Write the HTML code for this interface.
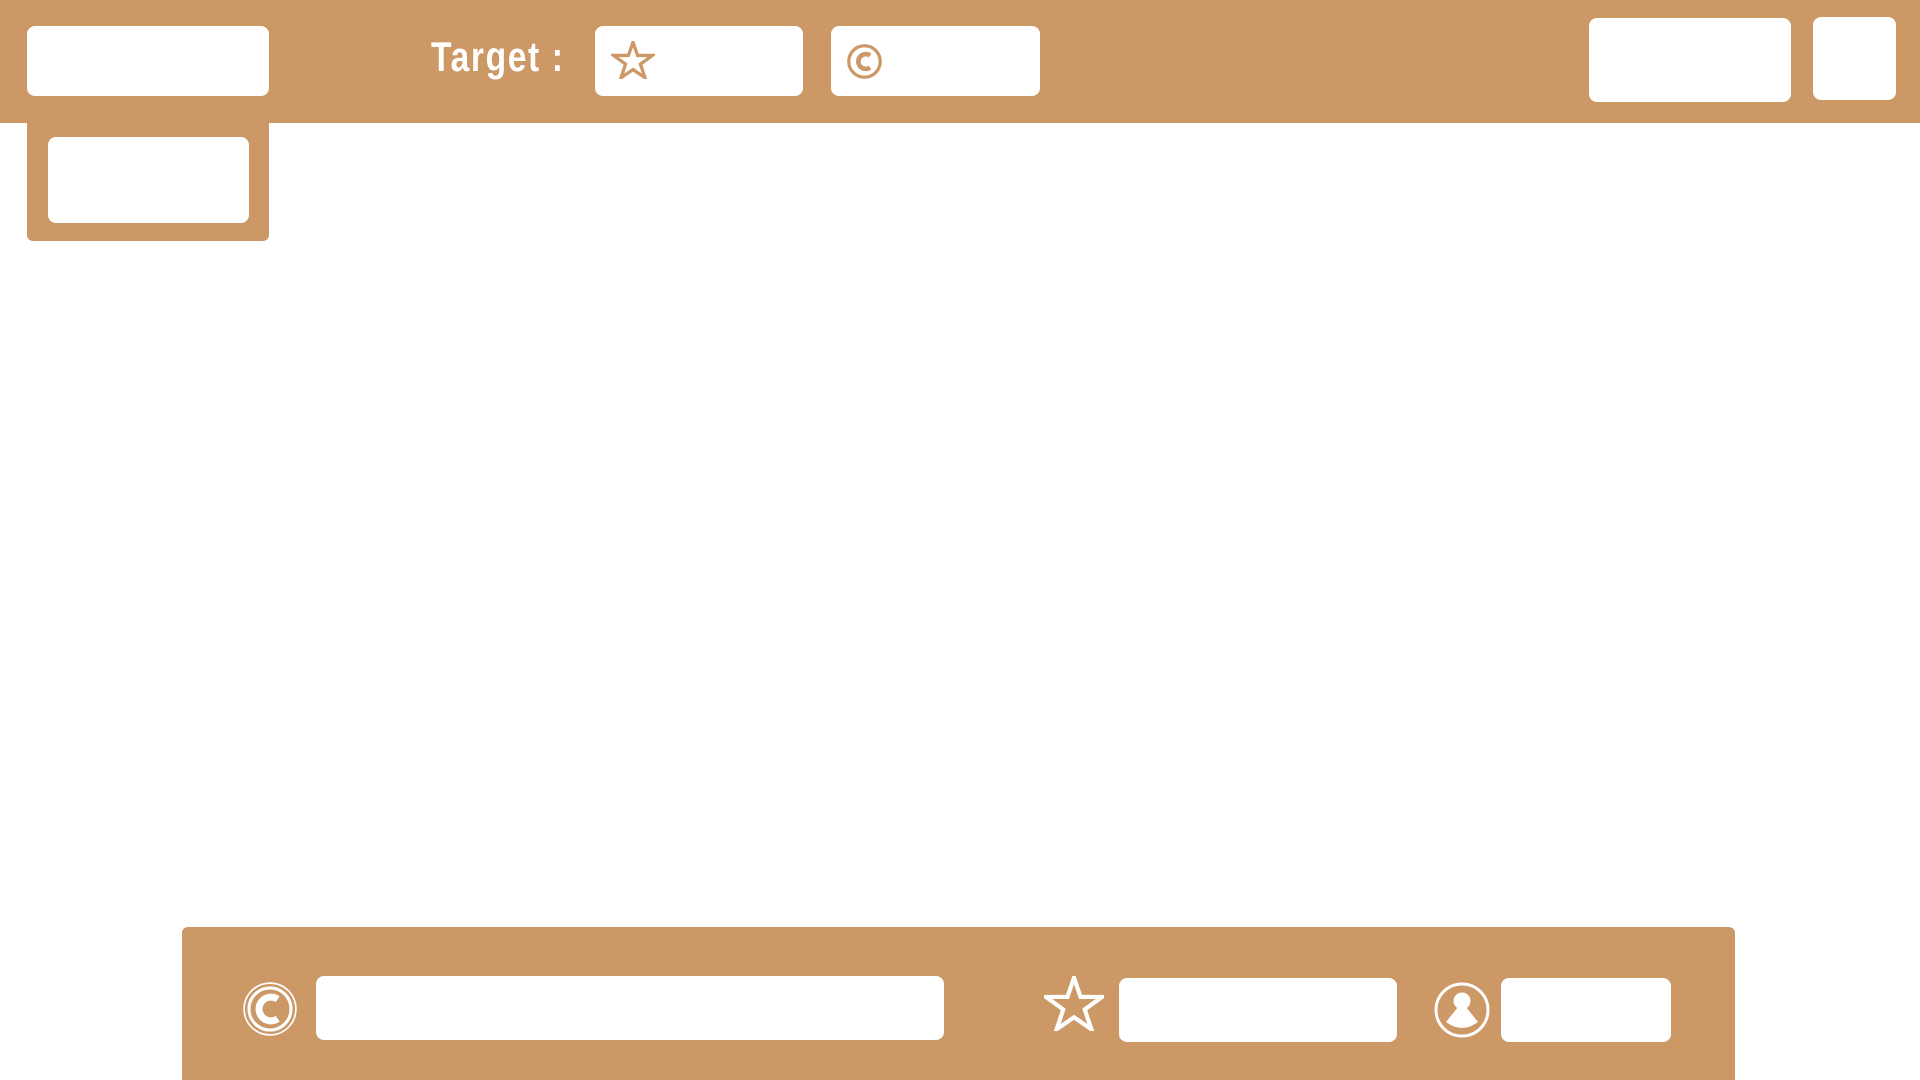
<!DOCTYPE html>
<html><head><style>
html,body{margin:0;width:1920px;height:1080px;background:#fff;overflow:hidden;position:relative;font-family:"Liberation Sans",sans-serif}
.a{position:absolute}
.br{background:#CC9866}
.w{background:#fff;border-radius:8px}
</style></head><body>
<div class="a br" style="left:0;top:0;width:1920px;height:123px"></div>
<div class="a br" style="left:27px;top:110px;width:242px;height:131px;border-radius:0 0 6px 6px"></div>
<div class="a w" style="left:27px;top:26px;width:242px;height:70px"></div>
<div class="a w" style="left:48px;top:137px;width:201px;height:86px"></div>
<div class="a" style="left:431px;top:33px;color:#fff;font-weight:bold;font-size:42px;line-height:48px;letter-spacing:2px;transform:scaleX(0.8);transform-origin:left top;white-space:nowrap">Target&nbsp;:</div>
<div class="a w" style="left:595px;top:26px;width:208px;height:70px"></div>
<svg class="a" style="left:611px;top:41px" width="44" height="38" viewBox="0 0 100 92"><polygon points="50,3 61,35 97,35 68,56 79,89 50,69 21,89 32,56 3,35 39,35" fill="none" stroke="#CC9866" stroke-width="8"/></svg>
<div class="a w" style="left:831px;top:26px;width:209px;height:70px"></div>
<svg class="a" style="left:846px;top:43px" width="37" height="37" viewBox="0 0 40 40"><circle cx="20" cy="20" r="17" fill="none" stroke="#CC9866" stroke-width="3.5"/><path d="M26 13.5A8 8 0 1 0 26 26.5" fill="none" stroke="#CC9866" stroke-width="5"/></svg>
<div class="a w" style="left:1589px;top:18px;width:202px;height:84px"></div>
<div class="a w" style="left:1813px;top:17px;width:83px;height:83px"></div>

<div class="a br" style="left:182px;top:927px;width:1553px;height:153px;border-radius:6px 6px 0 0"></div>
<svg class="a" style="left:242px;top:981px" width="56" height="56" viewBox="0 0 40 40"><circle cx="20" cy="20" r="18.5" fill="none" stroke="#fff" stroke-width="1.2"/><circle cx="20" cy="20" r="15" fill="none" stroke="#fff" stroke-width="2.2"/><path d="M25.5 13A8.5 8.5 0 1 0 25.5 27" fill="none" stroke="#fff" stroke-width="5"/></svg>
<div class="a w" style="left:316px;top:976px;width:628px;height:64px"></div>
<svg class="a" style="left:1044px;top:976px" width="60" height="55" viewBox="0 0 100 92"><polygon points="50,3 61,35 97,35 68,56 79,89 50,69 21,89 32,56 3,35 39,35" fill="none" stroke="#fff" stroke-width="7"/></svg>
<div class="a w" style="left:1119px;top:978px;width:278px;height:64px"></div>
<svg class="a" style="left:1434px;top:982px" width="56" height="56" viewBox="0 0 56 56"><circle cx="28" cy="28" r="26" fill="none" stroke="#fff" stroke-width="3"/><circle cx="28" cy="19" r="8.5" fill="#fff"/><path d="M24 25L12 40Q28 52 44 40L32 25Z" fill="#fff"/></svg>
<div class="a w" style="left:1501px;top:978px;width:170px;height:64px"></div>
</body></html>
